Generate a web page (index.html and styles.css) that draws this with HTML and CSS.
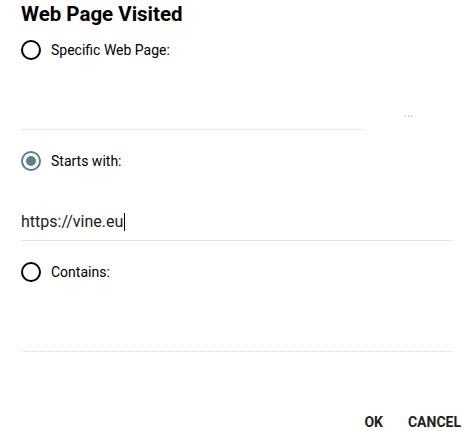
FILE: index.html
```html
<!DOCTYPE html>
<html>
<head>
<meta charset="utf-8">
<link rel="stylesheet" href="styles.css">
</head>
<body>
<div class="dialog">
  <div class="content">
    <h1 class="title">Web Page Visited</h1>

    <div class="option">
      <span class="radio"></span>
      <span class="label">Specific Web Page:</span>
    </div>
    <div class="field-row">
      <div class="field dotted short"></div>
      <div class="more">...</div>
    </div>

    <div class="option">
      <span class="radio checked"></span>
      <span class="label">Starts with:</span>
    </div>
    <div class="field solid">
      <div class="value">https://vine.eu<span class="caret"></span></div>
    </div>

    <div class="option">
      <span class="radio"></span>
      <span class="label">Contains:</span>
    </div>
    <div class="field dotted"></div>
  </div>

  <div class="actions">
    <button class="btn">OK</button>
    <button class="btn">Cancel</button>
  </div>
</div>
</body>
</html>
```

FILE: styles.css
```css
html, body {
  margin: 0;
  padding: 0;
  background: #fff;
}

body {
  font-family: Roboto, "Noto Sans", sans-serif;
  color: #212121;
}

.dialog {
  width: 474px;
}

.content {
  padding: 0 21px;
  display: flex;
  flex-direction: column;
}

.title {
  margin: 0;
  padding-top: 2px;
  font-size: 20.5px;
  line-height: 24px;
  font-weight: 700;
  color: #000;
}

.option {
  height: 40px;
  display: flex;
  align-items: center;
  gap: 10px;
  margin-top: 11px;
}

.title + .option {
  margin-top: 4px;
}

.radio {
  width: 20px;
  height: 20px;
  box-sizing: border-box;
  border: 2px solid #000;
  border-radius: 50%;
  display: flex;
  align-items: center;
  justify-content: center;
  flex: none;
}

.radio.checked {
  border-color: #607d8b;
}

.radio.checked::after {
  content: "";
  width: 10px;
  height: 10px;
  border-radius: 50%;
  background: #607d8b;
}

.label {
  font-size: 14px;
  line-height: 20px;
  color: #000;
}

.field-row {
  display: flex;
  align-items: stretch;
}

.field {
  height: 60px;
  box-sizing: border-box;
  display: flex;
  flex-direction: column;
  justify-content: flex-end;
  padding-bottom: 6px;
}

.field.short {
  width: 342px;
  margin-left: 1px;
}

.field.dotted {
  border-bottom: 1px dotted #dddddd;
}

.field.dotted:not(.short) {
  margin-left: 1px;
}

.field.solid {
  border-bottom: 1px solid #e3e3e3;
}

.more {
  flex: 1;
  display: flex;
  align-items: flex-end;
  justify-content: center;
  padding-bottom: 8px;
  box-sizing: border-box;
  font-size: 14px;
  line-height: 20px;
  color: #b9c1dc;
  letter-spacing: 0;
}

.value {
  font-size: 16px;
  line-height: 24px;
  color: #212121;
  display: flex;
  align-items: center;
}

.caret {
  display: inline-block;
  width: 1px;
  height: 18px;
  background: #000;
  margin-left: 1px;
}

.actions {
  display: flex;
  justify-content: flex-end;
  gap: 9px;
  padding-right: 5px;
  margin-top: 52px;
}

.btn {
  font-family: Roboto, "Noto Sans", sans-serif;
  font-size: 14px;
  font-weight: 700;
  text-transform: uppercase;
  color: #212121;
  background: none;
  border: 0;
  padding: 0 8px;
  height: 36px;
  line-height: 36px;
  margin: 0;
}
```
